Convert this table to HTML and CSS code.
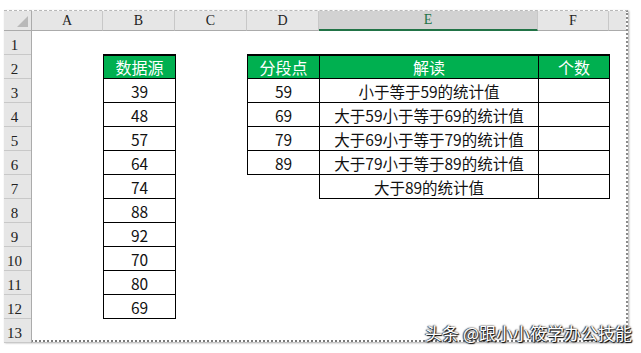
FILE: index.html
```html
<!DOCTYPE html>
<html lang="zh">
<head>
<meta charset="utf-8">
<title>分段统计</title>
<link rel="stylesheet" href="styles.css">
</head>
<body>
<div class="page">
  <div class="sheet">
    <div class="ch corner"><span class="tri"></span></div>
    <div class="ch">A</div>
    <div class="ch">B</div>
    <div class="ch">C</div>
    <div class="ch">D</div>
    <div class="ch sel">E</div>
    <div class="ch">F</div>
    <div class="ch last"></div>

    <div class="rowhdrs">
      <div class="rh">1</div>
      <div class="rh">2</div>
      <div class="rh">3</div>
      <div class="rh">4</div>
      <div class="rh">5</div>
      <div class="rh">6</div>
      <div class="rh">7</div>
      <div class="rh">8</div>
      <div class="rh">9</div>
      <div class="rh">10</div>
      <div class="rh">11</div>
      <div class="rh">12</div>
      <div class="rh">13</div>
    </div>

    <div class="tblB">
      <div class="cell head">数据源</div>
      <div class="cell">39</div>
      <div class="cell">48</div>
      <div class="cell">57</div>
      <div class="cell">64</div>
      <div class="cell">74</div>
      <div class="cell">88</div>
      <div class="cell">92</div>
      <div class="cell">70</div>
      <div class="cell">80</div>
      <div class="cell">69</div>
    </div>

    <div class="tblD">
      <div class="cell head first">分段点</div>
      <div class="cell head">解读</div>
      <div class="cell head">个数</div>

      <div class="cell first">59</div>
      <div class="cell">小于等于59的统计值</div>
      <div class="cell"></div>

      <div class="cell first">69</div>
      <div class="cell">大于59小于等于69的统计值</div>
      <div class="cell"></div>

      <div class="cell first">79</div>
      <div class="cell">大于69小于等于79的统计值</div>
      <div class="cell"></div>

      <div class="cell first">89</div>
      <div class="cell">大于79小于等于89的统计值</div>
      <div class="cell"></div>

      <div class="blank"></div>
      <div class="cell edge">大于89的统计值</div>
      <div class="cell"></div>
    </div>
  </div>
  <div class="watermark">头条 @跟小小筱学办公技能</div>
</div>
</body>
</html>
```
FILE: styles.css
```css
html, body {
  margin: 0;
  padding: 0;
  background: #ffffff;
}
.page {
  position: relative;
  width: 641px;
  height: 353px;
  overflow: hidden;
}
.sheet {
  margin: 10px 0 0 4px;
  width: 624px;
  height: 332px;
  display: grid;
  grid-template-columns: 28px 71px 72px 72px 72px 219px 71px 1fr;
  grid-template-rows: 20px repeat(13, 24px);
  background: #ffffff;
  border-top: 1px dashed #b8b8b8;
  border-right: 2px dotted #8a8a8a;
  border-bottom: 2px dotted #7a7a7a;
  box-shadow: 1px 1px 2px rgba(0,0,0,0.35);
  box-sizing: border-box;
}
.ch {
  background: #e6e6e6;
  border-right: 1px solid #c8c8c8;
  border-bottom: 1px solid #ababab;
  box-sizing: border-box;
  font-family: "Liberation Serif", serif;
  font-size: 14px;
  color: #222;
  display: flex;
  align-items: flex-end;
  justify-content: center;
  padding-bottom: 1px;
}
.ch.corner {
  position: relative;
  border-right: 1px solid #ababab;
}
.ch .tri {
  position: absolute;
  right: 3px;
  bottom: 3px;
  width: 0;
  height: 0;
  border-left: 11px solid transparent;
  border-bottom: 11px solid #b9b9b9;
}
.ch.sel {
  background: #d2d2d2;
  border-bottom: 2px solid #217346;
  color: #217346;
}
.ch.last {
  border-right: none;
}
.rowhdrs {
  grid-column: 1;
  grid-row: 2 / span 13;
  display: flex;
  flex-direction: column;
  background: #e6e6e6;
  border-right: 1px solid #ababab;
}
.rh {
  height: 24px;
  box-sizing: border-box;
  border-bottom: 1px solid #c8c8c8;
  font-family: "Liberation Serif", serif;
  font-size: 15px;
  color: #222;
  display: flex;
  align-items: flex-end;
  justify-content: center;
  padding-right: 6px;
}
.tblB {
  grid-column: 3;
  grid-row: 3 / span 11;
  width: 73px;
  display: flex;
  flex-direction: column;
  margin-top: -1px;
}
.cell {
  height: 24px;
  box-sizing: border-box;
  border-bottom: 1px solid #000;
  border-right: 1px solid #000;
  font-family: "Noto Sans CJK SC", "Noto Sans", sans-serif;
  font-size: 15.5px;
  color: #111;
  display: flex;
  align-items: center;
  justify-content: center;
  white-space: nowrap;
}
.tblB .cell {
  border-left: 1px solid #000;
}
.cell.head {
  background: #00b050;
  color: #ffffff;
  border-top: 2px solid #000;
  height: 25px;
  font-size: 16px;
}
.tblD {
  grid-column: 5 / span 3;
  grid-row: 3 / span 6;
  display: grid;
  grid-template-columns: 73px 219px 71px;
  grid-template-rows: 25px repeat(5, 24px);
  margin-top: -1px;
}
.tblD .cell {
  height: auto;
}
.cell.first {
  border-left: 1px solid #000;
}
.cell.edge {
  box-shadow: -1px 0 0 #000;
}
.watermark {
  position: absolute;
  right: 9px;
  bottom: 10px;
  font-family: "Noto Sans CJK SC", sans-serif;
  font-size: 17px;
  line-height: 20px;
  color: #ffffff;
  text-shadow: 1px 1px 1px #000, -1px 0 1px #333, 0 0 2px #222;
}
```
